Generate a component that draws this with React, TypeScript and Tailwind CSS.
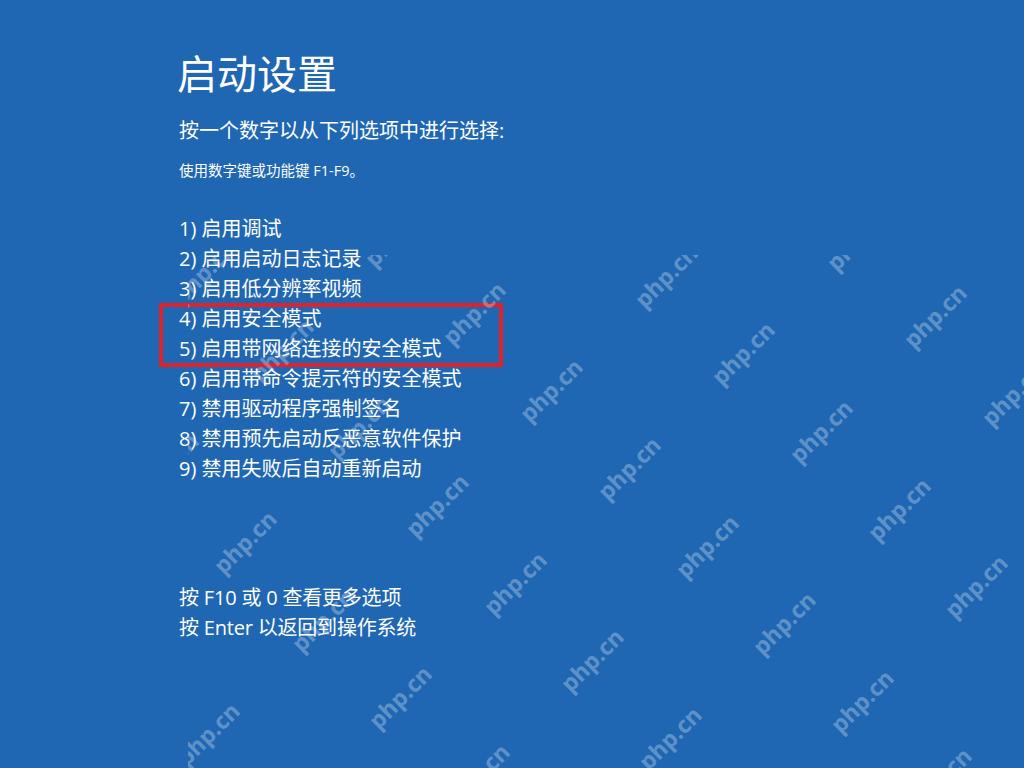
import React from 'react';

const options = [
  '1) 启用调试',
  '2) 启用启动日志记录',
  '3) 启用低分辨率视频',
  '4) 启用安全模式',
  '5) 启用带网络连接的安全模式',
  '6) 启用带命令提示符的安全模式',
  '7) 禁用驱动程序强制签名',
  '8) 禁用预先启动反恶意软件保护',
  '9) 禁用失败后自动重新启动',
];

// watermark lattice (centres, page coords)
const CLIP_LEFT = 188;
const CLIP_TOP = 255;
const marks: { x: number; y: number }[] = [];
for (let n = -8; n <= 8; n++) {
  for (let m = -4; m <= 8; m++) {
    const x = 245 + 77.7 * n + 192 * m;
    const y = 542 + 77.7 * n - 37 * m;
    if (x > 120 && x < 1110 && y > 200 && y < 830) marks.push({ x, y });
  }
}

const font = { fontFamily: '"Open Sans", "Noto Sans CJK SC", sans-serif' };

const App: React.FC = () => {
  return (
    <div className="relative h-screen w-full overflow-hidden bg-[#2067b3] text-white" style={font}>
      <div className="flex flex-col pl-[179px] pt-[54px]">
        <h1 className="-ml-[2px] text-[40px] leading-[40px] font-normal">启动设置</h1>
        <p className="mt-[22px] text-[20px] leading-[30px]">按一个数字以从下列选项中进行选择:</p>
        <p className="mt-[15px] text-[14.5px] leading-[20px]">使用数字键或功能键 F1-F9。</p>

        <div className="relative mt-[33px]">
          <ul className="flex flex-col">
            {options.map((o) => (
              <li key={o} className="whitespace-nowrap text-[20px] leading-[30px]">
                {o}
              </li>
            ))}
          </ul>
          {/* highlight around options 4 and 5 */}
          <div className="absolute left-[-20px] top-[89px] h-[64px] w-[344px] border-4 border-[#e0232a]" />
        </div>

        <div className="mt-[99px] flex flex-col">
          <p className="text-[20px] leading-[30px] tracking-[-0.2px]">按 F10 或 0 查看更多选项</p>
          <p className="text-[20px] leading-[30px] tracking-[-0.2px]">按 Enter 以返回到操作系统</p>
        </div>
      </div>

      {/* watermark */}
      <div className="pointer-events-none absolute top-[255px] right-0 bottom-0 left-[188px] overflow-hidden">
        {marks.map((p, i) => (
          <span
            key={i}
            className="absolute -translate-x-1/2 -translate-y-1/2 -rotate-45 whitespace-nowrap text-[23px] font-bold leading-none text-white/30"
            style={{ left: p.x - CLIP_LEFT, top: p.y - CLIP_TOP, fontFamily: '"Open Sans", sans-serif' }}
          >
            php.cn
          </span>
        ))}
      </div>
    </div>
  );
};

export default App;
